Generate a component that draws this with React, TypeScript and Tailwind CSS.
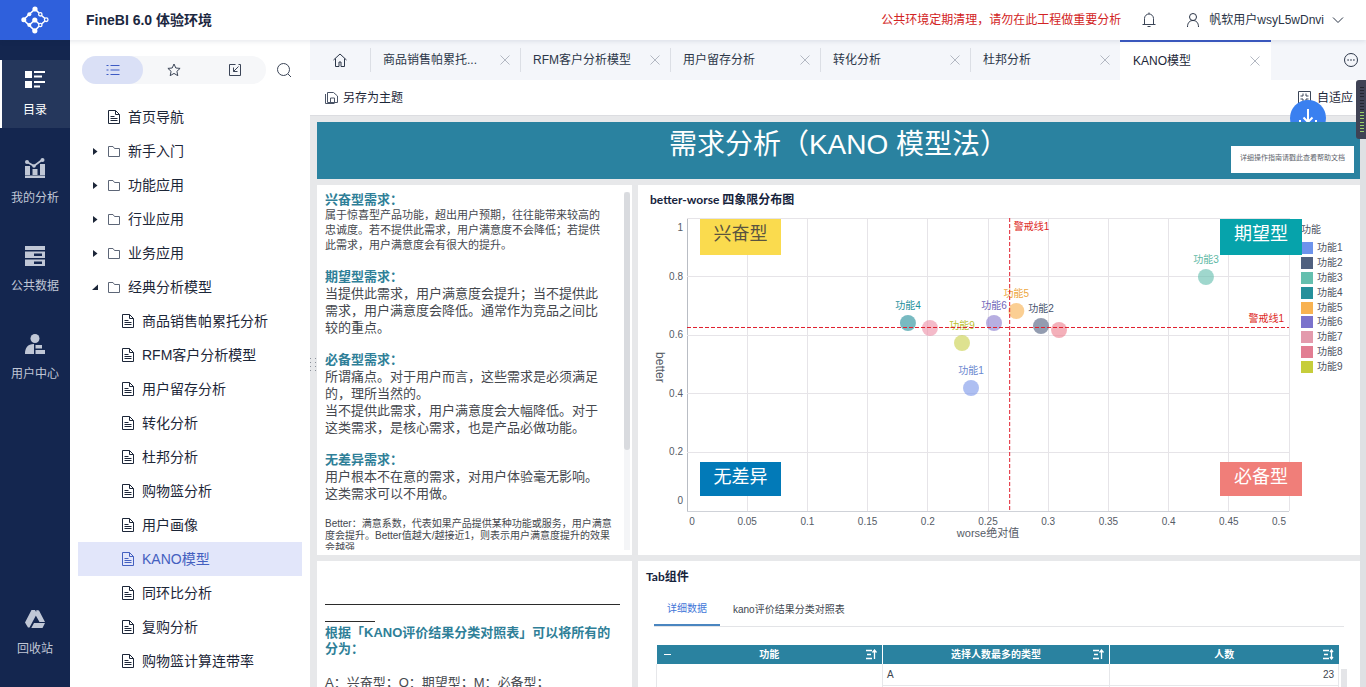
import React from 'react';

const FONT = "font-['Liberation_Sans','Noto_Sans_CJK_SC',sans-serif]";

const openTabs = ['商品销售帕累托...', 'RFM客户分析模型', '用户留存分析', '转化分析', '杜邦分析', 'KANO模型'];

const folders = ['新手入门', '功能应用', '行业应用', '业务应用', '经典分析模型'];

const reports = [
  '商品销售帕累托分析',
  'RFM客户分析模型',
  '用户留存分析',
  '转化分析',
  '杜邦分析',
  '购物篮分析',
  '用户画像',
  'KANO模型',
  '同环比分析',
  '复购分析',
  '购物篮计算连带率',
];

const legend = [
  { name: '功能1', color: '#6d93ec' },
  { name: '功能2', color: '#50607f' },
  { name: '功能3', color: '#64bfae' },
  { name: '功能4', color: '#25909b' },
  { name: '功能5', color: '#f8b251' },
  { name: '功能6', color: '#7b72cc' },
  { name: '功能7', color: '#e39aac' },
  { name: '功能8', color: '#e27d92' },
  { name: '功能9', color: '#c6cd3b' },
];

interface Point {
  worse: number;
  better: number;
  fill: string;
  label?: string;
  text?: string;
}

const points: Point[] = [
  { worse: 0.1835, better: 0.6416, fill: '#25909b', label: '功能4', text: '#25909b' },
  { worse: 0.2018, better: 0.6246, fill: '#ee8fa8' },
  { worse: 0.255, better: 0.6416, fill: '#8a7ccf', label: '功能6', text: '#6f64b8' },
  { worse: 0.2284, better: 0.5734, fill: '#c9d04c', label: '功能9', text: '#b9c02f' },
  { worse: 0.2359, better: 0.4198, fill: '#7d97ea', label: '功能1', text: '#6a87cf' },
  { worse: 0.2735, better: 0.6826, fill: '#f8b251', label: '功能5', text: '#eda63c' },
  { worse: 0.294, better: 0.6314, fill: '#50607f', label: '功能2', text: '#46536e' },
  { worse: 0.309, better: 0.6177, fill: '#ee7f90' },
  { worse: 0.431, better: 0.7986, fill: '#64bfae', label: '功能3', text: '#5db8a5' },
];

const xTicks = [0, 0.05, 0.1, 0.15, 0.2, 0.25, 0.3, 0.35, 0.4, 0.45, 0.5];
const yTicks = [0, 0.2, 0.4, 0.6, 0.8, 1];

const xPos = (v: number) => `${v * 200}%`;
const yPos = (v: number) => `${(1 - v) * 100}%`;

const Logo = () => (
  <svg viewBox="0 0 28 28" className="w-7 h-7" fill="none" stroke="#fff" strokeWidth="1.6">
    <path d="M14 3 2.500 13.700 13.800 24.800M8.300 19l5.500-5 4.300 4M14 3l4 4M13.800 24.800l4.200-4.500M20.500 9.500 24 12.500M20.500 18l3.500-3" />
    <circle cx="14" cy="3" r="2.600" fill="#fff" stroke="none" />
    <circle cx="8.300" cy="8.200" r="2" fill="#fff" stroke="none" />
    <circle cx="2.800" cy="13.700" r="2.500" fill="#fff" stroke="none" />
    <circle cx="8.300" cy="19" r="2" fill="#fff" stroke="none" />
    <circle cx="13.800" cy="14" r="2.600" fill="#fff" stroke="none" />
    <circle cx="13.800" cy="24.800" r="2.600" fill="#fff" stroke="none" />
    <circle cx="19.300" cy="8.300" r="1.700" fill="#2f60dc" strokeWidth="1.300" />
    <circle cx="25.200" cy="13.700" r="1.800" fill="#2f60dc" strokeWidth="1.300" />
    <circle cx="19.300" cy="19" r="1.700" fill="#2f60dc" strokeWidth="1.300" />
  </svg>
);

const CatalogIcon = () => (
  <svg viewBox="0 0 20 20" className="w-5 h-5" fill="currentColor">
    <path d="M0 1h7v7H0zM0 11h7v7H0zM9 1h11v2H9zM9 5.500h8v2H9zM9 11h11v2H9zM9 15.500h6v2H9z" />
  </svg>
);

const AnalysisIcon = () => (
  <svg viewBox="0 0 20 20" className="w-5 h-5" fill="currentColor">
    <path d="M0 8h5v9H0zM7.500 11h5v6h-5zM15 6h5v11h-5zM0 17.500h20v2.500H0z" />
    <path d="m2 4 7 4 8-6" fill="none" stroke="currentColor" strokeWidth="1.800" />
    <circle cx="2" cy="4" r="2" />
    <circle cx="9" cy="8" r="1.800" />
    <circle cx="17.500" cy="2" r="2" />
  </svg>
);

const DataIcon = () => (
  <svg viewBox="0 0 20 20" className="w-5 h-5" fill="currentColor" fillRule="evenodd">
    <path d="M0 0h20v4H0zM0 5.500h20v6.500H0zM9 7.500h8v2.500H9zM0 13.500h20V20H0zM9 15.500h8V18H9z" />
  </svg>
);

const UserCenterIcon = () => (
  <svg viewBox="0 0 20 20" className="w-5 h-5" fill="currentColor">
    <circle cx="10" cy="4.500" r="4.500" />
    <path d="M0 20c0-6 2.500-10 9-10v10zM10.500 11H17v3.500h-6.500zM10.500 16H20v4h-9.500z" />
  </svg>
);

const RecycleIcon = () => (
  <svg viewBox="0 0 20 20" className="w-5 h-5" fill="currentColor">
    <path d="M6.500 1H10L12 4.500 4.500 18.500H3L0 13.500zM11.500 1 14 1.500 20 13h-5.500L10.500 6zM9 14h11l-2.500 5H6.300z" />
  </svg>
);

const DocIcon = () => (
  <svg viewBox="0 0 14 14" className="w-[14px] h-[14px] shrink-0" fill="none" stroke="currentColor">
    <path d="M1.500 .5h7l4 4v9h-11zM8.500 .5v4h4M3.500 6.500h4M3.500 8.500h7M3.500 10.500h7" />
  </svg>
);

const FolderIcon = () => (
  <svg viewBox="0 0 14 14" className="w-[14px] h-[14px] shrink-0" fill="none" stroke="#5d6677">
    <path d="M1.500 2.500h4.500l1.500 2h5v8h-11z" />
  </svg>
);

const CloseIcon = () => (
  <svg viewBox="0 0 10 10" className="w-[10px] h-[10px]" fill="none" stroke="#b3b8c2">
    <path d="m.5 .5 9 9M9.500 .5l-9 9" />
  </svg>
);

const SortIcon = ({ both }: { both?: boolean }) => (
  <svg viewBox="0 0 12 12" className="w-3 h-3" fill="none" stroke="#fff" strokeWidth="1.300">
    <path d="M1 1.500h6M2 5.500h4M1 9.500h6" />
    <path d={both ? 'M9.500 1v9M8 3l1.500-2L11 3M8 8l1.500 2L11 8' : 'M9.500 10V1M7.500 3.500l2-2.500 2 2.500'} />
  </svg>
);

const navItems = [
  { label: '目录', icon: <CatalogIcon /> },
  { label: '我的分析', icon: <AnalysisIcon /> },
  { label: '公共数据', icon: <DataIcon /> },
  { label: '用户中心', icon: <UserCenterIcon /> },
];

const Header = () => (
  <header className="flex h-10 shrink-0 items-center bg-white relative z-10 shadow-[0_1px_5px_rgba(20,35,70,0.12)]">
    <div className="flex h-10 w-[70px] items-center justify-center bg-[#2f60dc]">
      <Logo />
    </div>
    <h1 className="ml-4 text-sm leading-[22px] font-bold text-[#1b2740]">FineBI 6.0 体验环境</h1>
    <p className="ml-auto text-xs text-[#d22323]">公共环境定期清理，请勿在此工程做重要分析</p>
    <button aria-label="消息" className="ml-5 text-[#3b4557]">
      <svg viewBox="0 0 16 16" className="w-4 h-4" fill="none" stroke="currentColor">
        <path d="M3.500 12V6.500a4.500 4.500 0 0 1 9 0V12M1.500 12.500h13M6.500 14.500h3M8 .5v1.500" />
      </svg>
    </button>
    <button className="ml-7 mr-[22px] flex items-center gap-2 text-xs text-[#2a3446]">
      <svg viewBox="0 0 16 16" className="w-4 h-4" fill="none" stroke="currentColor">
        <circle cx="8" cy="5" r="3.500" />
        <path d="M2.500 15c0-4 2-6.500 5.500-6.500s5.500 2.500 5.500 6.500" />
      </svg>
      帆软用户wsyL5wDnvi
      <svg viewBox="0 0 12 12" className="w-3 h-3" fill="none" stroke="currentColor">
        <path d="m1 3.500 5 5 5-5" />
      </svg>
    </button>
  </header>
);

const NavBar = () => (
  <nav className="flex w-[70px] shrink-0 flex-col gap-5 bg-[#14264f] pt-5 pb-4 text-xs">
    {navItems.map((item, i) => (
      <button
        key={item.label}
        className={
          i === 0
            ? 'flex h-[68px] flex-col items-center gap-3 border-l-2 border-white bg-[#25375c] pt-[10px] pr-[2px] text-white'
            : 'flex h-[68px] flex-col items-center gap-3 pt-[10px] text-[#c0c7d6]'
        }
      >
        {item.icon}
        {item.label}
      </button>
    ))}
    <button className="mt-auto flex h-[68px] flex-col items-center gap-3 pt-[6px] text-[#c0c7d6]">
      <RecycleIcon />
      回收站
    </button>
  </nav>
);

const Tree = () => (
  <aside className="flex w-60 shrink-0 flex-col bg-white text-sm text-[#1c2638]">
    <div className="flex items-center pl-3 pt-4">
      <div className="flex h-7 w-46 rounded-full bg-[#f6f7f9] text-[#3b4557]">
        <button aria-label="列表" className="flex flex-1 items-center justify-center rounded-full bg-[#dae0f6] text-[#3d5bc4]">
          <svg viewBox="0 0 14 14" className="w-[14px] h-[14px]" stroke="currentColor">
            <path d="M.5 2.500h2M4.500 2.500h9M.5 7h2M4.500 7h9M.5 11.500h2M4.500 11.500h9" />
          </svg>
        </button>
        <button aria-label="收藏" className="flex flex-1 items-center justify-center">
          <svg viewBox="0 0 14 14" className="w-[14px] h-[14px]" fill="none" stroke="currentColor">
            <path d="m7 1 1.800 4 4.300.4L9.900 8.300l.9 4.400L7 10.400l-3.800 2.300.9-4.400L.9 5.400 5.200 5z" />
          </svg>
        </button>
        <button aria-label="分享" className="flex flex-1 items-center justify-center">
          <svg viewBox="0 0 14 14" className="w-[14px] h-[14px]" fill="none" stroke="currentColor">
            <path d="M7.500 1.500h-6v11h11v-11h-2M10.500 3.500 5.500 8.500M5.500 4.500v4h4" />
          </svg>
        </button>
      </div>
      <button aria-label="搜索" className="ml-[10px] text-[#3b4557]">
        <svg viewBox="0 0 16 16" className="w-4 h-4" fill="none" stroke="currentColor">
          <circle cx="7.500" cy="7.500" r="6" />
          <path d="m12 12 3 3" />
        </svg>
      </button>
    </div>
    <ul className="mt-4 px-2">
      <li>
        <a href="#home" className="flex h-[34px] items-center gap-[7px] pl-[29px]">
          <DocIcon />
          首页导航
        </a>
      </li>
      {folders.map((name, i) => (
        <li key={name}>
          <button className="flex h-[34px] w-full items-center gap-[7px] pl-[13px]">
            <svg viewBox="0 0 9 9" className="w-[9px] h-[9px]" fill="#1c2638">
              <path d={i === 4 ? 'M7 1.500V7H1z' : 'M2 1 6.500 4.500 2 8z'} />
            </svg>
            <FolderIcon />
            {name}
          </button>
        </li>
      ))}
      {reports.map((name) => (
        <li key={name}>
          <a
            href="#report"
            className={
              name === 'KANO模型'
                ? 'flex h-[34px] items-center gap-[7px] bg-[#e2e6fa] pl-[43px] text-[#4460c0]'
                : 'flex h-[34px] items-center gap-[7px] pl-[43px]'
            }
          >
            <DocIcon />
            {name}
          </a>
        </li>
      ))}
    </ul>
  </aside>
);

const TabStrip = () => (
  <div className="flex h-10 shrink-0 items-center bg-[#f4f6fa] text-xs text-[#2c3749]">
    <button aria-label="首页" className="flex w-[60px] justify-center">
      <svg viewBox="0 0 14 14" className="w-[14px] h-[14px]" fill="none" stroke="currentColor">
        <path d="M.5 7 7 1l6.500 6M2.500 5.500v8h3.500V9h2v4.500h3.500v-8" />
      </svg>
    </button>
    {openTabs.map((name) => (
      <div
        key={name}
        className={
          name === 'KANO模型'
            ? 'flex h-10 w-[151px] items-center justify-between border-t-2 border-[#3d5bc4] bg-white pl-[13px] pr-[11px] text-[#1c2638]'
            : 'flex h-6 w-[150px] items-center justify-between border-l border-[#dcdfe5] pl-3 pr-[10px]'
        }
      >
        <button>{name}</button>
        <button aria-label={`关闭 ${name}`}>
          <CloseIcon />
        </button>
      </div>
    ))}
    <button aria-label="更多" className="ml-auto mr-2">
      <svg viewBox="0 0 14 14" className="w-[14px] h-[14px]" fill="none" stroke="currentColor">
        <circle cx="7" cy="7" r="6.500" />
        <path d="M3.500 7h1.200M6.400 7h1.200M9.300 7h1.200" strokeWidth="1.300" />
      </svg>
    </button>
  </div>
);

const Toolbar = () => (
  <div className="relative z-10 flex h-9 shrink-0 items-center border-b border-[#dcdde1] bg-white pl-[15px] pr-[13px] text-xs text-[#1c2638]">
    <button className="flex items-center gap-[5px]">
      <svg viewBox="0 0 13 13" className="w-[13px] h-[13px]" fill="none" stroke="#4b5567">
        <path d="M2.500 1.500h6l4 3.500v6.500h-10zM5.500 11.500V7h4v4.500M.5 3v9.500h9" />
      </svg>
      另存为主题
    </button>
    <button className="ml-auto flex items-center gap-[6px]">
      <svg viewBox="0 0 13 13" className="w-[13px] h-[13px]" fill="none" stroke="#3b4557">
        <path d="M.5 .5h12v12H.5zM5 2.500V5H2.500M8 2.500V5h2.500M5 10.500V8H2.500M8 10.500V8h2.500" />
      </svg>
      自适应
    </button>
    <button aria-label="下载" className="absolute right-10 top-5 flex h-9 w-9 items-center justify-center rounded-full bg-[#3a80f0]">
      <svg viewBox="0 0 18 18" className="w-[18px] h-[18px]" fill="none" stroke="#fff" strokeWidth="2">
        <path d="M9 0v13M4.500 8.500 9 13l4.500-4.500M1 11v5h16v-5" />
      </svg>
    </button>
  </div>
);

const Heading = ({ children }: { children: React.ReactNode }) => (
  <h3 className="text-[13px] leading-4 font-bold text-[#2f7f98]">{children}</h3>
);

const Notes = () => (
  <section className="flex h-[370px] bg-white pl-2 pr-[2px] pt-[7px] pb-[5px]">
    <div className="h-full flex-1 overflow-hidden whitespace-nowrap text-[13px] leading-[17px] text-[#45484e]">
      <Heading>兴奋型需求：</Heading>
      <p className="text-[11px] leading-[15px]">
        属于惊喜型产品功能，超出用户预期，往往能带来较高的<br />
        忠诚度。若不提供此需求，用户满意度不会降低；若提供<br />
        此需求，用户满意度会有很大的提升。
      </p>
      <div className="mt-4">
        <Heading>期望型需求：</Heading>
        <p>
          当提供此需求，用户满意度会提升；当不提供此<br />
          需求，用户满意度会降低。通常作为竞品之间比<br />
          较的重点。
        </p>
      </div>
      <div className="mt-4">
        <Heading>必备型需求：</Heading>
        <p>
          所谓痛点。对于用户而言，这些需求是必须满足<br />
          的，理所当然的。<br />
          当不提供此需求，用户满意度会大幅降低。对于<br />
          这类需求，是核心需求，也是产品必做功能。
        </p>
      </div>
      <div className="mt-4">
        <Heading>无差异需求：</Heading>
        <p>
          用户根本不在意的需求，对用户体验毫无影响。<br />
          这类需求可以不用做。
        </p>
      </div>
      <p className="mt-4 text-[10px] leading-3">
        Better：满意系数，代表如果产品提供某种功能或服务，用户满意<br />
        度会提升。Better值越大/越接近1，则表示用户满意度提升的效果<br />
        会越强
      </p>
    </div>
    <div className="w-[6px] bg-[#f4f5f7]">
      <div className="h-[258px] rounded-full bg-[#d9dbdf]" />
    </div>
  </section>
);

const Rules = () => (
  <section className="flex-1 whitespace-nowrap bg-white px-2 pt-[43px] text-[13px] text-[#45484e]">
    <div className="mr-1 h-px bg-[#2b2b2b]" />
    <div className="mt-4 mb-[3px] h-px w-[50px] bg-[#2b2b2b]" />
    <Heading>
      根据「KANO评价结果分类对照表」可以将所有的<br />
      分为：
    </Heading>
    <p className="mt-[17px] leading-[17px]">A：兴奋型；O：期望型；M：必备型；</p>
  </section>
);

const Plot = () => (
  <div className="relative h-[293px] min-w-0 flex-1">
    <svg width="100%" height="100%" className="block overflow-visible text-[10px]" fill="#555b66">
      {xTicks.map((t, i) => (
        <g key={t}>
          <line x1={xPos(t)} x2={xPos(t)} y1="0" y2="100%" stroke={i === 0 ? '#b9bdc4' : '#e6e4e8'} shapeRendering="crispEdges" />
          <text x={xPos(t)} y="100%" dx={i === 0 ? 5 : i === 10 ? -10 : 0} dy="14" textAnchor="middle">{t}</text>
        </g>
      ))}
      {yTicks.map((t, i) => (
        <g key={t}>
          <line x1="0" x2="100%" y1={yPos(t)} y2={yPos(t)} stroke={i === 0 ? '#cfd2d8' : '#e6e4e8'} shapeRendering="crispEdges" />
          <text x="-4" y={yPos(t)} dy={i === 0 ? -7 : i === 5 ? 13 : 3} textAnchor="end">{t}</text>
        </g>
      ))}
      <text x="50%" y="100%" dy="26" textAnchor="middle" className="text-[11px]">worse绝对值</text>
      <svg x="-28" y="51%" className="overflow-visible">
        <text transform="rotate(90)" textAnchor="middle" dy="3" className="text-xs">better</text>
      </svg>
      {points.map((p) => (
        <g key={p.worse}>
          <circle cx={xPos(p.worse)} cy={yPos(p.better)} r="8" fill={p.fill} fillOpacity="0.62" />
          {p.label && (
            <text x={xPos(p.worse)} y={yPos(p.better)} dy="-14" textAnchor="middle" fill={p.text}>{p.label}</text>
          )}
        </g>
      ))}
      <g stroke="#e0202e" strokeDasharray="4 2">
        <line x1={xPos(0.268)} x2={xPos(0.268)} y1="0" y2="100%" />
        <line x1="0" x2="100%" y1={yPos(0.6263)} y2={yPos(0.6263)} />
      </g>
      <g fill="#dd1f24">
        <text x={xPos(0.268)} y="12" dx="4">警戒线1</text>
        <text x="100%" y={yPos(0.6263)} dx="-5" dy="-5" textAnchor="end">警戒线1</text>
      </g>
    </svg>
    <div className="absolute left-[13px] top-px h-9 w-[81px] bg-[#fadb4e] text-center text-lg leading-[30px] text-[#5a5440]">兴奋型</div>
    <div className="absolute -right-[13px] top-px h-9 w-[82px] bg-[#06a3ab] text-center text-lg leading-[30px] text-white">期望型</div>
    <div className="absolute bottom-[15px] left-[13px] h-[34px] w-[81px] bg-[#027ab8] text-center text-lg leading-[30px] text-white">无差异</div>
    <div className="absolute bottom-[15px] -right-[13px] h-[34px] w-[82px] bg-[#f07e79] text-center text-lg leading-[30px] text-white">必备型</div>
  </div>
);

const ChartPanel = () => (
  <section className="h-[370px] bg-white">
    <h2 className="pl-3 pt-[7px] font-['Lato','Noto_Sans_CJK_SC',sans-serif] text-xs leading-4 font-bold text-[#16233c]">
      better-worse 四象限分布图
    </h2>
    <div className="mt-[10px] flex gap-3 pl-[49px] pr-[18px]">
      <Plot />
      <div className="w-[41px] whitespace-nowrap pt-1 text-[10px] text-[#4d535f]">
        <p className="leading-4">功能</p>
        <ul className="mt-[3px] flex h-[133px] flex-col">
          {legend.map((item) => (
            <li key={item.name} className="flex flex-1 items-center gap-1 leading-3">
              <span className="h-3 w-3 shrink-0" style={{ backgroundColor: item.color }} />
              {item.name}
            </li>
          ))}
        </ul>
      </div>
    </div>
  </section>
);

const TablePanel = () => (
  <section className="min-h-0 flex-1 overflow-hidden bg-white">
    <h2 className="pl-2 pt-2 font-['Lato','Noto_Sans_CJK_SC',sans-serif] text-xs leading-4 font-bold text-[#16233c]">Tab组件</h2>
    <div className="ml-4 mr-4 mt-[7px] flex border-b border-[#e3e4e7] text-[10px] text-[#40464f]">
      <button className="-mb-px h-[34px] border-b-2 border-[#4a86c0] px-[13px] text-[#3f76d8]">详细数据</button>
      <button className="h-[34px] px-[13px]">kano评价结果分类对照表</button>
    </div>
    <div className="mt-[18px] flex pl-[18px] pr-[13px]">
      <table className="flex-1 table-fixed border-collapse text-[10px] text-[#40464f]">
        <thead>
          <tr className="h-[19px] bg-[#2a82a0] text-white">
            <th className="w-[226px] border-r border-white p-0">
              <div className="flex items-center justify-between px-[5px] leading-[18px]">
                <button aria-label="收起" className="h-[18px] w-3">
                  <svg viewBox="0 0 12 12" className="w-3 h-3" stroke="#fff">
                    <path d="M2 5.500h7" />
                  </svg>
                </button>
                功能
                <SortIcon />
              </div>
            </th>
            <th className="w-[227px] border-r border-white p-0">
              <div className="flex items-center justify-between px-[5px] leading-[18px]">
                <span className="w-3" />
                选择人数最多的类型
                <SortIcon />
              </div>
            </th>
            <th className="p-0">
              <div className="flex items-center justify-between px-[5px] leading-[18px]">
                <span className="w-3" />
                人数
                <SortIcon both />
              </div>
            </th>
          </tr>
        </thead>
        <tbody>
          <tr className="h-[21px]">
            <td rowSpan={2} className="border-x border-[#e6e7ea]" />
            <td className="border-r border-b border-[#e6e7ea] px-1 py-0">A</td>
            <td className="border-r border-b border-[#e6e7ea] px-1 py-0 text-right">23</td>
          </tr>
          <tr className="h-[21px]">
            <td className="border-r border-[#e6e7ea]" />
            <td className="border-r border-[#e6e7ea]" />
          </tr>
        </tbody>
      </table>
      <div className="ml-[2px] mt-6 w-[6px] bg-[#e4e5e8]" />
    </div>
  </section>
);

const Dashboard = () => (
  <div className="relative flex min-h-0 flex-1 bg-[#dfe1e4]">
    <div className="flex min-w-0 flex-1 flex-col overflow-hidden bg-[#e7e8ea] pl-[7px] pt-[6px]">
      <div className="relative z-10 flex h-[57px] shrink-0 justify-center bg-[#2a82a0]">
        <h2 className="text-[28px] leading-[46px] text-white">需求分析（KANO 模型法）</h2>
        <a href="#help" className="absolute right-[6px] bottom-[6px] h-[27px] w-[123px] whitespace-nowrap bg-white text-center text-[7px] leading-6 text-[#60646c]">
          详细操作指南请戳此查看帮助文档
        </a>
      </div>
      <div className="mt-[6px] flex min-h-0 flex-1 gap-[6px]">
        <div className="flex w-[315px] shrink-0 flex-col gap-[6px]">
          <Notes />
          <Rules />
        </div>
        <div className="flex min-w-0 flex-1 flex-col gap-[6px]">
          <ChartPanel />
          <TablePanel />
        </div>
      </div>
    </div>
    <div className="w-[6px] shrink-0" />
    <svg viewBox="0 0 8 14" className="absolute left-0 top-[241px] h-[14px] w-2" fill="#8d929b">
      <path d="M0 1h1v1H0zM5 1h1v1H5zM0 5h1v1H0zM5 5h1v1H5zM0 9h1v1H0zM5 9h1v1H5zM0 13h1v1H0zM5 13h1v1H5z" />
    </svg>
  </div>
);

const SideWidget = () => (
  <div className="absolute right-0 top-20 z-20 flex h-[59px] w-[10px] flex-col justify-between rounded-l-[3px] bg-[#3f4254] py-[7px] pl-1 pr-[2px]">
    {Array.from({ length: 15 }, (_, i) => (
      <span key={i} className={i < 8 ? 'h-px bg-[#23252f]' : 'h-px bg-[#9ccf6a]'} />
    ))}
  </div>
);

export default function App() {
  return (
    <div className={`relative flex h-screen flex-col overflow-hidden bg-white ${FONT}`}>
      <Header />
      <div className="flex min-h-0 flex-1">
        <NavBar />
        <Tree />
        <main className="flex min-w-0 flex-1 flex-col">
          <TabStrip />
          <Toolbar />
          <Dashboard />
        </main>
      </div>
      <SideWidget />
    </div>
  );
}
